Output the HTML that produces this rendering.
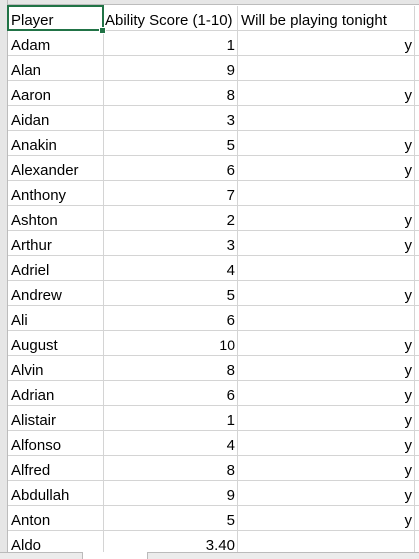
<!DOCTYPE html>
<html><head><style>
body{margin:0;width:419px;height:558px;overflow:hidden;background:#fff;font-family:"Liberation Sans",Arial,sans-serif;font-size:15px;color:#000;position:relative}
.hdr{position:absolute;left:0;top:0;width:7px;height:552px;background:#e6e6e6;border-right:1px solid #bcbcbc}
.top{position:absolute;left:0;top:0;width:419px;height:4px;background:#e6e6e6;border-bottom:1px solid #bcbcbc}
.r{position:absolute;left:8px;width:411px;height:24px;border-bottom:1px solid #d4d4d4}
.c{position:absolute;top:0;height:24px;line-height:29px;white-space:nowrap;overflow:hidden}
.a{left:3px;width:92px}
.b{left:95px;width:131px;text-align:right;border-left:1px solid #d4d4d4;padding-right:3px;height:25px}
.d{left:229px;width:174px;text-align:right;border-left:1px solid #d4d4d4;padding-right:3px;height:25px}
.e{left:406px;width:5px;border-left:1px solid #d4d4d4;height:25px}
.sel{position:absolute;left:7px;top:5px;width:93px;height:22px;border:2px solid #217346}
.h{position:absolute;left:99px;top:27px;width:5px;height:5px;background:#217346;border:1px solid #fff}
.bot{position:absolute;left:0;top:552px;width:419px;height:6px;background:#fff}
</style></head><body>
<div class="top"></div><div class="hdr"></div>
<div class="r" style="top:6px"><div class="c a">Player</div><div class="c b" style="text-align:left;padding-left:1px">Ability Score (1-10)</div><div class="c d" style="text-align:left;padding-left:3px">Will be playing tonight</div><div class="c e"></div></div>
<div class="r" style="top:31px"><div class="c a">Adam</div><div class="c b">1</div><div class="c d">y</div><div class="c e"></div></div>
<div class="r" style="top:56px"><div class="c a">Alan</div><div class="c b">9</div><div class="c d"></div><div class="c e"></div></div>
<div class="r" style="top:81px"><div class="c a">Aaron</div><div class="c b">8</div><div class="c d">y</div><div class="c e"></div></div>
<div class="r" style="top:106px"><div class="c a">Aidan</div><div class="c b">3</div><div class="c d"></div><div class="c e"></div></div>
<div class="r" style="top:131px"><div class="c a">Anakin</div><div class="c b">5</div><div class="c d">y</div><div class="c e"></div></div>
<div class="r" style="top:156px"><div class="c a">Alexander</div><div class="c b">6</div><div class="c d">y</div><div class="c e"></div></div>
<div class="r" style="top:181px"><div class="c a">Anthony</div><div class="c b">7</div><div class="c d"></div><div class="c e"></div></div>
<div class="r" style="top:206px"><div class="c a">Ashton</div><div class="c b">2</div><div class="c d">y</div><div class="c e"></div></div>
<div class="r" style="top:231px"><div class="c a">Arthur</div><div class="c b">3</div><div class="c d">y</div><div class="c e"></div></div>
<div class="r" style="top:256px"><div class="c a">Adriel</div><div class="c b">4</div><div class="c d"></div><div class="c e"></div></div>
<div class="r" style="top:281px"><div class="c a">Andrew</div><div class="c b">5</div><div class="c d">y</div><div class="c e"></div></div>
<div class="r" style="top:306px"><div class="c a">Ali</div><div class="c b">6</div><div class="c d"></div><div class="c e"></div></div>
<div class="r" style="top:331px"><div class="c a">August</div><div class="c b" style="font-size:14px">10</div><div class="c d">y</div><div class="c e"></div></div>
<div class="r" style="top:356px"><div class="c a">Alvin</div><div class="c b">8</div><div class="c d">y</div><div class="c e"></div></div>
<div class="r" style="top:381px"><div class="c a">Adrian</div><div class="c b">6</div><div class="c d">y</div><div class="c e"></div></div>
<div class="r" style="top:406px"><div class="c a">Alistair</div><div class="c b">1</div><div class="c d">y</div><div class="c e"></div></div>
<div class="r" style="top:431px"><div class="c a">Alfonso</div><div class="c b">4</div><div class="c d">y</div><div class="c e"></div></div>
<div class="r" style="top:456px"><div class="c a">Alfred</div><div class="c b">8</div><div class="c d">y</div><div class="c e"></div></div>
<div class="r" style="top:481px"><div class="c a">Abdullah</div><div class="c b">9</div><div class="c d">y</div><div class="c e"></div></div>
<div class="r" style="top:506px"><div class="c a">Anton</div><div class="c b">5</div><div class="c d">y</div><div class="c e"></div></div>
<div class="r" style="top:531px"><div class="c a">Aldo</div><div class="c b">3.40</div><div class="c d"></div><div class="c e"></div></div>
<div class="sel"></div><div class="h"></div>
<div class="bot"><div style="position:absolute;left:0;top:0;width:82px;height:6px;background:#ececec;border:1px solid #bbb;border-bottom:none;border-left:none"></div><div style="position:absolute;left:147px;top:0;width:272px;height:6px;background:#ececec;border:1px solid #bbb;border-bottom:none;border-right:none"></div></div>
</body></html>
